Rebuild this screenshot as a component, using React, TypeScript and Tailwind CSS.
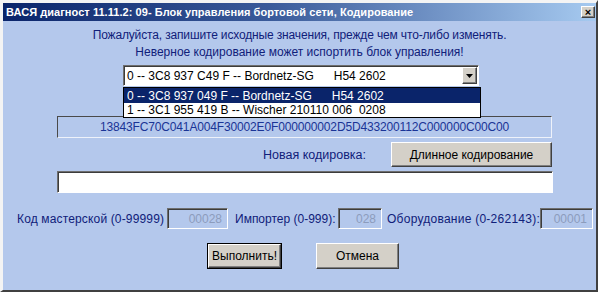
const font = "font-['Liberation_Sans',Arial,sans-serif]";

const sunken =
  "border border-t-[#6e6e6e] border-l-[#6e6e6e] border-b-white border-r-white shadow-[inset_1px_1px_0_#3c3c3c]";
const raised =
  "border border-t-white border-l-white border-b-[#404040] border-r-[#404040] bg-[#d4d0c8] shadow-[inset_-1px_-1px_0_#808080]";

function NumField({ value, w }: { value: string; w: string }) {
  return (
    <div className={`${sunken} ${w} shrink-0 h-[21px] flex items-center justify-end pr-[5px] text-[#8c9cbc]`}>{value}</div>
  );
}

export default function App() {
  return (
    <div className={`w-[600px] h-[294px] bg-white ${font} text-[12px] leading-[16px]`}>
      <div className="w-[598px] h-[292px] border-l-[3px] border-t-[3px] border-r-2 border-b-2 border-t-[#f4f4f4] border-l-[#f4f4f4] border-b-[#404040] border-r-[#404040] bg-[#b4c8ec] flex flex-col">
        {/* title bar */}
        <div className="h-[18px] flex items-center justify-between pl-[3px] pr-[1px] bg-[linear-gradient(90deg,#0a246a_0%,#3a5a9a_45%,#a6caf0_100%)]">
          <span className="text-white font-bold text-[11px] tracking-[0.05px]">
            ВАСЯ диагност 11.11.2: 09- Блок управления бортовой сети, Кодирование
          </span>
          <div className={`${raised} w-[14px] h-[12px] flex items-center justify-center text-black font-bold text-[11px] leading-none`}>
            ×
          </div>
        </div>

        <div className="relative flex flex-col text-[#10207a]">
          <p className="mt-[6px] text-center tracking-[-0.15px]">Пожалуйста, запишите исходные значения, прежде чем что-либо изменять.</p>
          <p className="mt-[1px] text-center">Неверное кодирование может испортить блок управления!</p>

          {/* combo box */}
          <div className="mt-[5px] ml-[120px] w-[356px] h-[21px] bg-white border border-t-[#6e6e6e] border-l-[#6e6e6e] border-b-white border-r-white shadow-[inset_1px_1px_0_#3c3c3c] flex items-center text-black">
            <span className="pl-[3px] flex-1 whitespace-pre">0 -- 3C8 937 C49 F -- Bordnetz-SG      H54 2602</span>
            <div className={`${raised} w-[15px] h-[17px] mr-[1px] flex items-center justify-center`}>
              <svg width="7" height="4" viewBox="0 0 7 4">
                <path d="M0 0h7L3.5 4z" fill="#000" />
              </svg>
            </div>
          </div>

          {/* dropdown list */}
          <div className="absolute left-[120px] top-[66px] w-[358px] h-[31px] bg-white border border-black text-black z-10 flex flex-col">
            <div className="h-[15px] bg-[#0a246a] text-white pl-[3px] flex items-center whitespace-pre">
              0 -- 3C8 937 049 F -- Bordnetz-SG      H54 2602
            </div>
            <div className="h-[14px] pl-[3px] flex items-center whitespace-pre">
              1 -- 3C1 955 419 B -- Wischer 210110 006  0208
            </div>
          </div>

          {/* current coding */}
          <div className="mt-[30px] ml-[54px] w-[495px] h-[22px] border border-t-[#4a4a4a] border-l-[#4a4a4a] border-b-[#eef2fa] border-r-[#eef2fa] flex items-center justify-center text-[#1a3496] tracking-[-0.15px]">
            13843FC70C041A004F30002E0F000000002D5D433200112C000000C00C00
          </div>

          {/* new coding label + button */}
          <div className="mt-[4px] flex items-center">
            <span className="ml-[260px] w-[128px] text-[12.5px]">Новая кодировка:</span>
            <div className={`${raised} w-[161px] h-[25px] flex items-center justify-center text-black`}>
              Длинное кодирование
            </div>
          </div>

          <div className={`${sunken} mt-[4px] ml-[54px] w-[496px] h-[22px] bg-white`} />

          {/* codes */}
          <div className="mt-[15px] flex items-center whitespace-nowrap">
            <span className="ml-[14px] w-[150px] shrink-0 tracking-[0.15px]">Код мастерской (0-99999)</span>
            <NumField value="00028" w="w-[61px]" />
            <span className="ml-[7px] w-[103px] shrink-0">Импортер (0-999):</span>
            <NumField value="028" w="w-[44px]" />
            <span className="ml-[5px] w-[153px] shrink-0 tracking-[0.25px]">Оборудование (0-262143):</span>
            <NumField value="00001" w="w-[53px]" />
          </div>

          {/* actions */}
          <div className="mt-[14px] flex">
            <div className="ml-[204px] border border-black">
              <div className={`${raised} w-[73px] h-[24px] flex items-center justify-center text-black`}>Выполнить!</div>
            </div>
            <div className={`${raised} ml-[34px] w-[83px] h-[26px] flex items-center justify-center text-black`}>Отмена</div>
          </div>
        </div>
      </div>
    </div>
  );
}
